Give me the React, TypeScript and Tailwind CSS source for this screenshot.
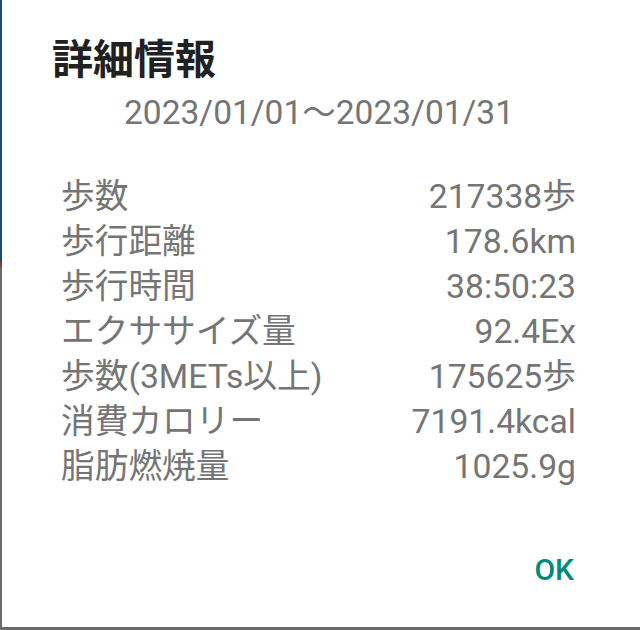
const rows = [
  { label: '歩数', value: '217338歩' },
  { label: '歩行距離', value: '178.6km' },
  { label: '歩行時間', value: '38:50:23' },
  { label: 'エクササイズ量', value: '92.4Ex' },
  { label: '歩数(3METs以上)', value: '175625歩' },
  { label: '消費カロリー', value: '7191.4kcal' },
  { label: '脂肪燃焼量', value: '1025.9g' },
]

export default function App() {
  return (
    <div
      className="flex h-[630px] w-[640px] bg-[#6b6b6b]"
      style={{ fontFamily: 'Roboto, "Noto Sans CJK JP", sans-serif' }}
    >
      <div className="flex w-[2px] flex-col">
        <div className="h-[262px] bg-[#1b4a7a]" />
        <div className="h-[5px] bg-[#8a3b2b]" />
        <div className="flex-1 bg-[#6b6b6b]" />
      </div>
      <div className="mb-[3px] flex flex-1 flex-col bg-white">
        <h1 className="pl-[50px] pt-[36px] text-[41px] font-bold leading-[48px] text-[#212121]">
          詳細情報
        </h1>
        <div className="mt-[9px] pl-[122px] text-[33.5px] leading-[40px] text-[#757575]">
          2023/01/01～2023/01/31
        </div>
        <div className="mt-[42px] flex flex-col pl-[59px] pr-[64px]">
          {rows.map((row) => (
            <div
              key={row.label}
              className="flex h-[45px] items-center justify-between text-[33.7px] text-[#757575]"
            >
              <span>{row.label}</span>
              <span>{row.value}</span>
            </div>
          ))}
        </div>
        <div className="mt-[60px] flex justify-end pr-[66px]">
          <span className="text-[30px] font-medium leading-[40px] text-[#00897b]">OK</span>
        </div>
      </div>
    </div>
  )
}
